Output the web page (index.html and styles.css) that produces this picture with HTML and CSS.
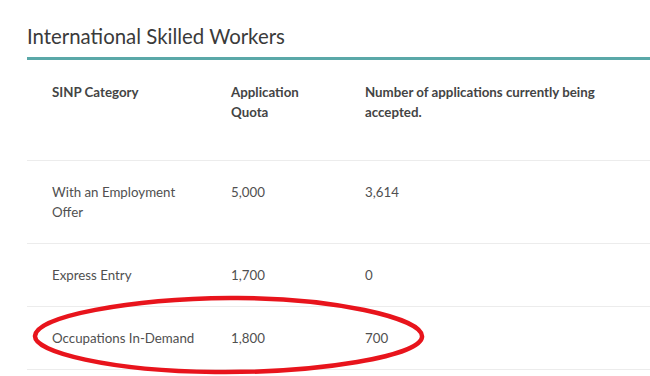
FILE: index.html
```html
<!DOCTYPE html>
<html lang="en">
<head>
<meta charset="utf-8">
<title>International Skilled Workers</title>
<link rel="stylesheet" href="styles.css">
</head>
<body>
<main class="page">
  <section class="panel">
    <h2 class="title">International Skilled Workers</h2>
    <table class="quota">
      <colgroup>
        <col class="col1">
        <col class="col2">
        <col class="col3">
      </colgroup>
      <thead>
        <tr>
          <th>SINP Category</th>
          <th>Application Quota</th>
          <th class="wide">Number of applications currently being accepted.</th>
        </tr>
      </thead>
      <tbody>
        <tr>
          <td>With an Employment Offer</td>
          <td>5,000</td>
          <td>3,614</td>
        </tr>
        <tr>
          <td>Express Entry</td>
          <td>1,700</td>
          <td>0</td>
        </tr>
        <tr>
          <td>Occupations In-Demand</td>
          <td>1,800</td>
          <td>700</td>
        </tr>
      </tbody>
    </table>
  </section>
  <svg class="circle" width="650" height="376" viewBox="0 0 650 376" aria-hidden="true">
    <path d="M230 298 C 330 297, 424 318, 422 337 C 420 356, 320 373, 215 372 C 110 371, 34 352, 35 336 C 36 316, 130 299, 230 298 Z" fill="none" stroke="#e8141c" stroke-width="4.5"/>
  </svg>
</main>
</body>
</html>
```

FILE: styles.css
```css
html, body {
  margin: 0;
  padding: 0;
  background: #ffffff;
}

.page {
  position: relative;
  width: 650px;
  height: 376px;
  overflow: hidden;
  font-family: Lato, "Liberation Sans", sans-serif;
}

.panel {
  padding: 22px 0 0 27px;
}

.title {
  margin: 0;
  font-size: 20.4px;
  font-weight: 400;
  line-height: 28px;
  color: #3a3a3a;
  padding-bottom: 7px;
  border-bottom: 3px solid #5aa8a8;
  width: 700px;
}

.quota {
  border-collapse: collapse;
  table-layout: fixed;
  width: 700px;
  font-size: 13.3px;
  line-height: 20px;
  color: #505050;
}

.col1 { width: 179px; }
.col2 { width: 134px; }
.col3 { width: 387px; }

.quota th,
.quota td {
  text-align: left;
  vertical-align: top;
  padding: 21px 5px 21px 25px;
  border-bottom: 1px solid #ececec;
}

.quota th {
  font-weight: 700;
  color: #444444;
  padding-top: 22px;
  padding-bottom: 38px;
}

.quota th.wide {
  padding-right: 110px;
}

.circle {
  position: absolute;
  left: 0;
  top: 0;
  pointer-events: none;
}
```
